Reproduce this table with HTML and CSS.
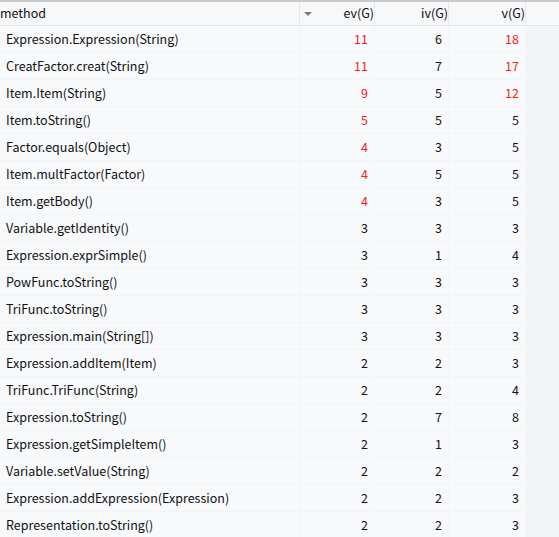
FILE: index.html
```html
<!DOCTYPE html>
<html>
<head>
<meta charset="utf-8">
<link rel="stylesheet" href="styles.css">
</head>
<body>
<div class="table">
  <div class="row head">
    <div class="cell name">method</div>
    <div class="cell num sort"><span class="tri"></span>ev(G)</div>
    <div class="cell num">iv(G)</div>
    <div class="cell num">v(G)</div>
    <div class="cell fill"></div>
  </div>
  <div class="row"><div class="cell name">Expression.Expression(String)</div><div class="cell num red">11</div><div class="cell num">6</div><div class="cell num red">18</div><div class="cell fill"></div></div>
  <div class="row"><div class="cell name">CreatFactor.creat(String)</div><div class="cell num red">11</div><div class="cell num">7</div><div class="cell num red">17</div><div class="cell fill"></div></div>
  <div class="row"><div class="cell name">Item.Item(String)</div><div class="cell num red">9</div><div class="cell num">5</div><div class="cell num red">12</div><div class="cell fill"></div></div>
  <div class="row"><div class="cell name">Item.toString()</div><div class="cell num red">5</div><div class="cell num">5</div><div class="cell num">5</div><div class="cell fill"></div></div>
  <div class="row"><div class="cell name">Factor.equals(Object)</div><div class="cell num red">4</div><div class="cell num">3</div><div class="cell num">5</div><div class="cell fill"></div></div>
  <div class="row"><div class="cell name">Item.multFactor(Factor)</div><div class="cell num red">4</div><div class="cell num">5</div><div class="cell num">5</div><div class="cell fill"></div></div>
  <div class="row"><div class="cell name">Item.getBody()</div><div class="cell num red">4</div><div class="cell num">3</div><div class="cell num">5</div><div class="cell fill"></div></div>
  <div class="row"><div class="cell name">Variable.getIdentity()</div><div class="cell num">3</div><div class="cell num">3</div><div class="cell num">3</div><div class="cell fill"></div></div>
  <div class="row"><div class="cell name">Expression.exprSimple()</div><div class="cell num">3</div><div class="cell num">1</div><div class="cell num">4</div><div class="cell fill"></div></div>
  <div class="row"><div class="cell name">PowFunc.toString()</div><div class="cell num">3</div><div class="cell num">3</div><div class="cell num">3</div><div class="cell fill"></div></div>
  <div class="row"><div class="cell name">TriFunc.toString()</div><div class="cell num">3</div><div class="cell num">3</div><div class="cell num">3</div><div class="cell fill"></div></div>
  <div class="row"><div class="cell name">Expression.main(String[])</div><div class="cell num">3</div><div class="cell num">3</div><div class="cell num">3</div><div class="cell fill"></div></div>
  <div class="row"><div class="cell name">Expression.addItem(Item)</div><div class="cell num">2</div><div class="cell num">2</div><div class="cell num">3</div><div class="cell fill"></div></div>
  <div class="row"><div class="cell name">TriFunc.TriFunc(String)</div><div class="cell num">2</div><div class="cell num">2</div><div class="cell num">4</div><div class="cell fill"></div></div>
  <div class="row"><div class="cell name">Expression.toString()</div><div class="cell num">2</div><div class="cell num">7</div><div class="cell num">8</div><div class="cell fill"></div></div>
  <div class="row"><div class="cell name">Expression.getSimpleItem()</div><div class="cell num">2</div><div class="cell num">1</div><div class="cell num">3</div><div class="cell fill"></div></div>
  <div class="row"><div class="cell name">Variable.setValue(String)</div><div class="cell num">2</div><div class="cell num">2</div><div class="cell num">2</div><div class="cell fill"></div></div>
  <div class="row"><div class="cell name">Expression.addExpression(Expression)</div><div class="cell num">2</div><div class="cell num">2</div><div class="cell num">3</div><div class="cell fill"></div></div>
  <div class="row"><div class="cell name">Representation.toString()</div><div class="cell num">2</div><div class="cell num">2</div><div class="cell num">3</div><div class="cell fill"></div></div>
</div>
</body>
</html>
```

FILE: styles.css
```css
html, body {
  margin: 0;
  padding: 0;
  background: #f8f9fb;
  overflow: hidden;
}
body {
  font-family: "Noto Sans CJK SC", "Noto Sans", sans-serif;
  font-size: 12.5px;
  color: #111;
}
.table {
  border-top: 2px solid #c9c9c9;
  width: 559px;
}
.row {
  display: grid;
  grid-template-columns: 300px 75px 74px 77px 1fr;
  height: 26px;
  border-bottom: 1px solid #f3f4f6;
}
.row.head {
  height: 23px;
  border-bottom: 1px solid #e4e5e7;
  background: #f7f8fa;
}
.cell {
  display: flex;
  align-items: center;
  white-space: nowrap;
  border-right: 1px solid #f4f5f7;
  line-height: 1;
}
.head .cell {
  border-right: 1px solid #e6e7e9;
}
.head .cell.fill {
  background: #f7f8fa;
}
.cell.fill {
  border-right: none;
  background: #f3f4f6;
}
.name {
  padding-left: 6px;
}
.head .name {
  padding-left: 0;
}
.num {
  justify-content: flex-end;
  padding-right: 6px;
}
.head .num {
  padding-right: 0;
}
.sort {
  position: relative;
}
.tri {
  position: absolute;
  left: 4px;
  top: 10px;
  width: 0;
  height: 0;
  border-left: 4px solid transparent;
  border-right: 4px solid transparent;
  border-top: 4px solid #7a7a7a;
}
.red {
  color: #f5221a;
}
```
